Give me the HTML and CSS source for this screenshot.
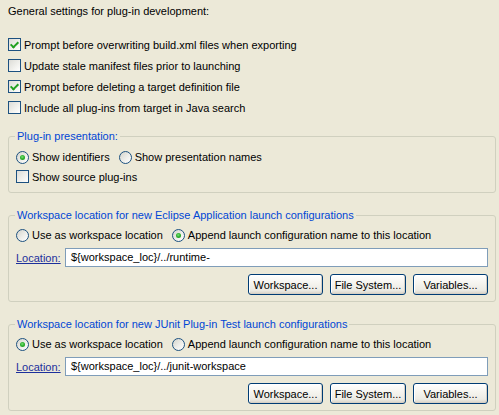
FILE: index.html
```html
<!DOCTYPE html>
<html>
<head>
<meta charset="utf-8">
<link rel="stylesheet" href="styles.css">
</head>
<body>
<div class="page">
  <div class="heading">General settings for plug-in development:</div>
  <div class="checks">
    <label class="opt"><span class="cb on"></span>Prompt before overwriting build.xml files when exporting</label>
    <label class="opt"><span class="cb"></span>Update stale manifest files prior to launching</label>
    <label class="opt"><span class="cb on"></span>Prompt before deleting a target definition file</label>
    <label class="opt"><span class="cb"></span>Include all plug-ins from target in Java search</label>
  </div>

  <fieldset class="group g1">
    <legend>Plug-in presentation:</legend>
    <div class="radios r1">
      <label class="opt"><span class="rb on"></span>Show identifiers</label>
      <label class="opt"><span class="rb"></span>Show presentation names</label>
    </div>
    <div class="r2">
      <label class="opt"><span class="cb"></span>Show source plug-ins</label>
    </div>
  </fieldset>

  <fieldset class="group gl">
    <legend>Workspace location for new Eclipse Application launch configurations</legend>
    <div class="radios r1">
      <label class="opt"><span class="rb"></span>Use as workspace location</label>
      <label class="opt"><span class="rb on"></span>Append launch configuration name to this location</label>
    </div>
    <div class="loc">
      <a class="link">Location:</a>
      <div class="field">${workspace_loc}/../runtime-</div>
    </div>
    <div class="buttons">
      <button class="btn">Workspace...</button>
      <button class="btn wide">File System...</button>
      <button class="btn">Variables...</button>
    </div>
  </fieldset>

  <fieldset class="group gl">
    <legend>Workspace location for new JUnit Plug-in Test launch configurations</legend>
    <div class="radios r1">
      <label class="opt"><span class="rb on"></span>Use as workspace location</label>
      <label class="opt"><span class="rb"></span>Append launch configuration name to this location</label>
    </div>
    <div class="loc">
      <a class="link">Location:</a>
      <div class="field">${workspace_loc}/../junit-workspace</div>
    </div>
    <div class="buttons">
      <button class="btn">Workspace...</button>
      <button class="btn wide">File System...</button>
      <button class="btn">Variables...</button>
    </div>
  </fieldset>
</div>
</body>
</html>
```

FILE: styles.css
```css
html, body {
  margin: 0;
  background: #ECE9D8;
}
body {
  font-family: "Liberation Sans", Arial, sans-serif;
  font-size: 11px;
  color: #000;
  overflow: hidden;
}
.page {
  display: flex;
  flex-direction: column;
  padding: 5px 3px 0 8px;
}
.heading {
  line-height: 13px;
  height: 13px;
}
.checks {
  margin-top: 16px;
  display: flex;
  flex-direction: column;
}
.checks .opt {
  height: 21px;
}
.opt {
  display: flex;
  align-items: center;
  gap: 3px;
  white-space: nowrap;
}
.cb {
  box-sizing: border-box;
  width: 13px;
  height: 13px;
  border: 1px solid #1C5180;
  background: linear-gradient(135deg, #DCDCD7 0%, #F0F0EC 55%, #FFFFFF 100%);
  display: grid;
  place-items: center;
  flex: none;
}
.cb.on::after {
  content: "";
  width: 3px;
  height: 6px;
  border-right: 2px solid #21A121;
  border-bottom: 2px solid #21A121;
  transform: translate(0, -1px) rotate(45deg);
}
.rb {
  box-sizing: border-box;
  width: 13px;
  height: 13px;
  border-radius: 50%;
  border: 1px solid #1C5180;
  background: linear-gradient(135deg, #D4D4CC 0%, #EEEEEA 55%, #FFFFFF 100%);
  display: grid;
  place-items: center;
  flex: none;
}
.rb.on::after {
  content: "";
  width: 5px;
  height: 5px;
  border-radius: 50%;
  background: radial-gradient(circle at 45% 40%, #7BE07B 0%, #2FB32F 45%, #158C15 100%);
}
.group {
  margin: 0;
  min-width: 0;
  border: 1px solid #D0D0BF;
  border-radius: 3px;
  padding: 0 7px 6px 7px;
}
.group legend {
  margin-left: -1px;
  padding: 0 2px;
  line-height: 13px;
  color: #0046D5;
  white-space: nowrap;
}
.g1 {
  margin-top: 12px;
  padding-top: 4px;
}
.gl {
  margin-top: 16px;
  padding-top: 3px;
}
.radios {
  display: flex;
  gap: 9px;
}
.r1 {
  height: 20px;
  align-items: center;
}
.r2 {
  height: 19px;
  display: flex;
  align-items: center;
}
.loc {
  margin-top: 3px;
  display: grid;
  grid-template-columns: 49px 1fr;
  align-items: center;
  height: 19px;
}
.link {
  color: #1C2F9C;
  text-decoration: underline;
}
.field {
  box-sizing: border-box;
  height: 19px;
  border: 1px solid #7F9DB9;
  background: #fff;
  padding: 0 5px;
  line-height: 17px;
  white-space: nowrap;
  overflow: hidden;
}
.buttons {
  margin-top: 7px;
  display: flex;
  justify-content: flex-end;
  gap: 7px;
}
.btn {
  box-sizing: border-box;
  width: 75px;
  height: 21px;
  padding: 0;
  font-family: "Liberation Sans", Arial, sans-serif;
  font-size: 11px;
  color: #000;
  border: 1px solid #003C74;
  border-radius: 3px;
  background: linear-gradient(#FFFFFF 0%, #F6F5F0 40%, #ECEBE4 80%, #D8D2C6 100%);
  box-shadow: inset -1px -1px 0 #D6D0C5, inset 1px 1px 0 #FFFFFF;
}
.btn.wide {
  width: 76px;
}
```
